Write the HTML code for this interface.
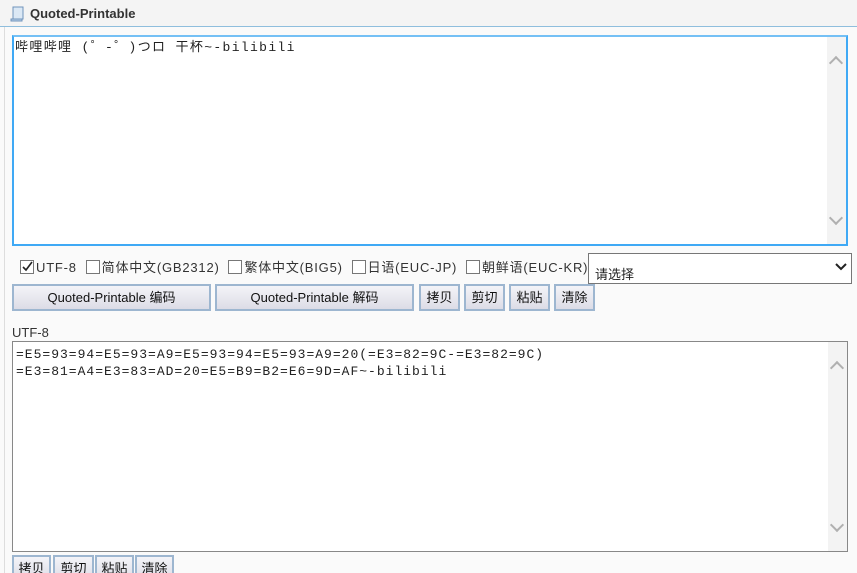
<!DOCTYPE html>
<html><head><meta charset="utf-8"><style>
html,body{margin:0;height:573px;overflow:hidden}
body{width:857px;background:#fafafa;position:relative;font-family:"Liberation Sans","Noto Sans CJK SC",sans-serif;font-size:13px;color:#222}
.a{position:absolute}
.hdr{left:0;top:0;width:857px;height:26px;background:#f4f4f4;border-bottom:1px solid #8fbedd}
.ta{background:#fff;box-sizing:border-box}
.mono{font-family:"Liberation Mono","Noto Sans CJK SC",monospace;font-size:13px;letter-spacing:1px;line-height:17px;white-space:pre}
.sb{right:0;top:0;bottom:0;width:19px;background:#f3f3f3}
.up,.dn{left:4px;width:8px;height:8px;border-left:2px solid #b0b0b0;border-top:2px solid #b0b0b0;transform:rotate(45deg)}
.dn{transform:rotate(225deg)}
.btn{box-sizing:border-box;height:27px;border:2px solid #9db6d0;background:linear-gradient(#f4f4f8,#dcdce6);text-align:center;line-height:23px;font-size:13px;color:#111}
.cb{display:inline-block;width:12px;height:12px;border:1px solid #777;background:#fff;vertical-align:-2px;margin-right:2px;position:relative;letter-spacing:0}
</style></head><body>
<div class="a hdr"></div>
<div class="a" style="left:4px;top:27px;width:1px;height:546px;background:#ddd"></div>
<svg class="a" style="left:10px;top:5px" width="16" height="17" viewBox="0 0 16 17"><path d="M3 2h10v12H3z" fill="#dbe8f5" stroke="#6f93bb"/><path d="M1 14h11v2H1z" fill="#b9d0ea" stroke="#6f93bb"/></svg>
<div class="a" style="left:30px;top:6px;font-weight:bold;font-size:13px;color:#333">Quoted-Printable</div>

<div class="a ta" style="left:12px;top:35px;width:836px;height:211px;border:2px solid #3fa9f5;border-top-color:#74c0f5">
<div class="a mono" style="left:1px;top:2px;letter-spacing:1.35px">哔哩哔哩 (゜-゜)つロ 干杯~-bilibili</div>
<div class="a sb"><div class="a up" style="top:21px"></div><div class="a dn" style="bottom:21px"></div></div>
</div>

<div class="a" style="left:20px;top:257px;white-space:nowrap;font-size:13px;color:#333;letter-spacing:0.8px">
<span class="cb"><svg class="a" style="left:1px;top:0" width="11" height="11"><path d="M1 6l3 3 6-8" fill="none" stroke="#222" stroke-width="1.6"/></svg></span>UTF-8&nbsp; <span class="cb"></span>简体中文(GB2312)&nbsp; <span class="cb"></span>繁体中文(BIG5)&nbsp; <span class="cb"></span>日语(EUC-JP)&nbsp; <span class="cb"></span>朝鲜语(EUC-KR)</div>
<div class="a" style="left:588px;top:253px;width:264px;height:31px;box-sizing:border-box;border:1px solid #777;background:#fff">
<div class="a" style="left:6px;top:10px;font-size:13px">请选择</div>
<svg class="a" style="right:4px;top:9px" width="12" height="9"><path d="M1 1l5 5 5-5" fill="none" stroke="#222" stroke-width="2"/></svg></div>

<div class="a btn" style="left:12px;top:284px;width:199px">Quoted-Printable 编码</div>
<div class="a btn" style="left:215px;top:284px;width:199px">Quoted-Printable 解码</div>
<div class="a btn" style="left:419px;top:284px;width:41px">拷贝</div>
<div class="a btn" style="left:464px;top:284px;width:41px">剪切</div>
<div class="a btn" style="left:509px;top:284px;width:41px">粘贴</div>
<div class="a btn" style="left:554px;top:284px;width:41px">清除</div>

<div class="a" style="left:12px;top:325px;font-size:13px;color:#333">UTF-8</div>
<div class="a ta" style="left:12px;top:341px;width:836px;height:211px;border:1px solid #888">
<div class="a mono" style="left:3px;top:4px">=E5=93=94=E5=93=A9=E5=93=94=E5=93=A9=20(=E3=82=9C-=E3=82=9C)
=E3=81=A4=E3=83=AD=20=E5=B9=B2=E6=9D=AF~-bilibili</div>
<div class="a sb"><div class="a up" style="top:21px"></div><div class="a dn" style="bottom:21px"></div></div>
</div>

<div class="a btn" style="left:12px;top:555px;width:39px">拷贝</div>
<div class="a btn" style="left:53px;top:555px;width:41px">剪切</div>
<div class="a btn" style="left:95px;top:555px;width:39px">粘贴</div>
<div class="a btn" style="left:135px;top:555px;width:39px">清除</div>
</body></html>
